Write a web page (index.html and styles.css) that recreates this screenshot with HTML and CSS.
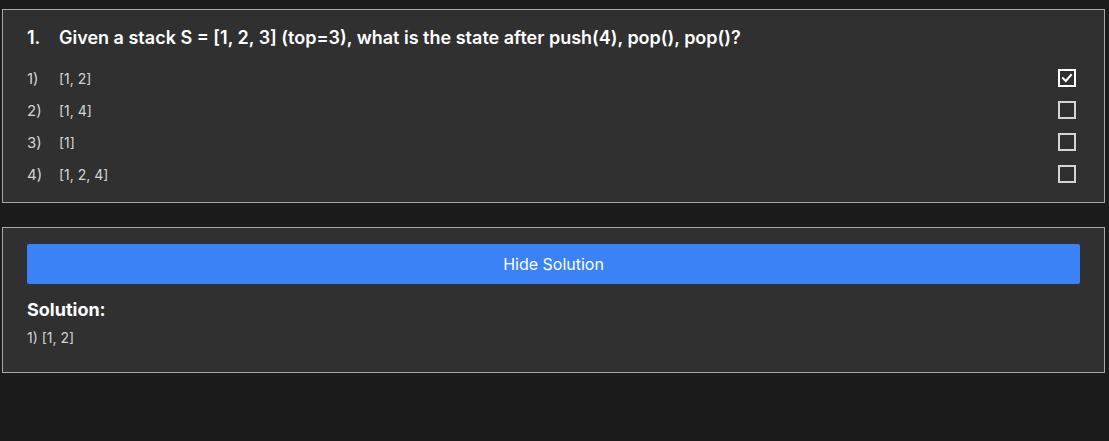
FILE: index.html
```html
<!DOCTYPE html>
<html>
<head>
<meta charset="utf-8">
<link rel="stylesheet" href="styles.css">
</head>
<body>
<main class="page">
  <section class="card question-card">
    <h2 class="question"><span class="qnum">1.</span><span class="qtext">Given a stack S = [1, 2, 3] (top=3), what is the state after push(4), pop(), pop()?</span></h2>
    <ul class="options">
      <li class="option"><span class="olabel">1)</span><span class="otext">[1, 2]</span><span class="box checked"><svg viewBox="0 0 12 12" width="12" height="12"><path d="M2 6.2 L4.8 9 L10 3" fill="none" stroke="#fff" stroke-width="2" stroke-linecap="square"/></svg></span></li>
      <li class="option"><span class="olabel">2)</span><span class="otext">[1, 4]</span><span class="box"></span></li>
      <li class="option"><span class="olabel">3)</span><span class="otext">[1]</span><span class="box"></span></li>
      <li class="option"><span class="olabel">4)</span><span class="otext">[1, 2, 4]</span><span class="box"></span></li>
    </ul>
  </section>
  <section class="card solution-card">
    <button class="toggle">Hide Solution</button>
    <h3 class="sol-title">Solution:</h3>
    <p class="sol-text">1) [1, 2]</p>
  </section>
</main>
</body>
</html>
```
FILE: styles.css
```css
* { box-sizing: border-box; }
html, body { margin: 0; padding: 0; background: #1b1b1b; }
body { font-family: Inter, "Noto Sans", sans-serif; color: #fff; }
.page { padding: 9px 4px 0 2px; display: flex; flex-direction: column; gap: 24px; }
.card { background: #303030; border: 1px solid #a8a8a8; }
.question-card { padding: 16px 24px 12px 24px; }
.question { margin: 0; display: flex; font-size: 18px; font-weight: 600; line-height: 24px; }
.qnum { width: 32px; flex: none; }
.options { list-style: none; margin: 12px 0 0 0; padding: 0; }
.option { display: flex; align-items: center; height: 32px; font-size: 14px; color: #d4d4d4; }
.olabel { width: 32px; flex: none; font-size: 15px; }
.otext { flex: 1; }
.box { width: 18px; height: 18px; border: 2px solid #d4d4d4; margin-right: 4px; display: flex; align-items: center; justify-content: center; }
.box.checked { border-color: #fff; }
.solution-card { padding: 16px 24px 24px 24px; }
.toggle { display: block; width: 100%; height: 40px; border: 0; border-radius: 2px; background: #3b82f6; color: #fff; font-family: Inter, sans-serif; font-size: 16px; }
.sol-title { margin: 14px 0 0 0; font-size: 18px; font-weight: 700; line-height: 24px; }
.sol-text { margin: 6px 0 0 0; font-size: 14px; line-height: 20px; color: #d4d4d4; }
```
